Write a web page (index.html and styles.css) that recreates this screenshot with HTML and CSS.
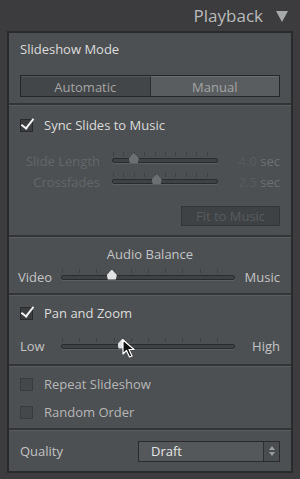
FILE: index.html
```html
<!DOCTYPE html>
<html lang="en">
<head>
    <meta charset="UTF-8">
    <title>Playback</title>
    <link rel="stylesheet" href="styles.css">
</head>
<body>
    <div class="header">
        <span class="title">Playback</span>
        <span class="arrow"></span>
    </div>

    <div class="panel">
        <div class="section mode">
            <div class="label">Slideshow Mode</div>
            <div class="segmented">
                <div class="seg">Automatic</div>
                <div class="seg on">Manual</div>
            </div>
        </div>

        <div class="section sync">
            <label class="check"><span class="box checked"></span>Sync Slides to Music</label>
            <div class="slider-row dim">
                <span class="name">Slide Length</span>
                <div class="track ticks"><span class="thumb dark" style="left: 20%"></span></div>
                <span class="value">4.0 <b>sec</b></span>
            </div>
            <div class="slider-row dim">
                <span class="name">Crossfades</span>
                <div class="track ticks"><span class="thumb dark" style="left: 42%"></span></div>
                <span class="value">2.5 <b>sec</b></span>
            </div>
            <div class="fit-row"><div class="fit">Fit to Music</div></div>
        </div>

        <div class="section audio">
            <div class="center">Audio Balance</div>
            <div class="range-row">
                <span>Video</span>
                <div class="track ticks wide"><span class="thumb" style="left: 27%"></span></div>
                <span>Music</span>
            </div>
        </div>

        <div class="section pan">
            <label class="check"><span class="box checked"></span>Pan and Zoom</label>
            <div class="range-row">
                <span>Low</span>
                <div class="track ticks wide"><span class="thumb" style="left: 35%"></span>
                    <svg class="cursor" width="14" height="20" viewBox="0 0 14 20">
                        <path d="M1 1 L1 15 L4.5 11.5 L7.5 18 L10 17 L7 10.5 L12 10.5 Z" fill="#111" stroke="#fff" stroke-width="1.2" stroke-linejoin="round"/>
                    </svg>
                </div>
                <span>High</span>
            </div>
        </div>

        <div class="section loop">
            <label class="check"><span class="box"></span>Repeat Slideshow</label>
            <label class="check"><span class="box"></span>Random Order</label>
        </div>

        <div class="section quality">
            <span>Quality</span>
            <div class="select">
                <span class="current">Draft</span>
                <span class="spin">
                    <svg width="8" height="12" viewBox="0 0 8 12"><path d="M4 1 L7 5 L1 5 Z M4 11 L7 7 L1 7 Z" fill="#9a9c9e"/></svg>
                </span>
            </div>
        </div>
    </div>
</body>
</html>
```

FILE: styles.css
```css
body {
    margin: 0;
    width: 300px;
    height: 479px;
    background: #3c3c3e;
    font-family: "Open Sans", "DejaVu Sans", sans-serif;
    font-size: 13px;
    color: #cfd0d0;
    overflow: hidden;
}

.header {
    display: flex;
    justify-content: flex-end;
    align-items: center;
    gap: 13px;
    height: 31px;
    padding-right: 12px;
}

.title {
    font-size: 17px;
    color: #b9babb;
}

.arrow {
    width: 0;
    height: 0;
    border-left: 6px solid transparent;
    border-right: 6px solid transparent;
    border-top: 11px solid #a7a8aa;
    margin-top: 2px;
}

.panel {
    margin: 0 7px;
    height: 442px;
    background: #4d5052;
    border: 2px solid #2a2a2c;
    box-sizing: border-box;
    display: flex;
    flex-direction: column;
}

.section {
    border-bottom: 2px solid #333436;
    box-shadow: 0 1px 0 #5a5d5f;
    padding: 0 11px;
    margin-bottom: 1px;
}

.section:last-child {
    border-bottom: none;
    box-shadow: none;
    margin-bottom: 0;
}

.mode {
    height: 72px;
    padding-top: 7px;
    box-sizing: border-box;
}

.label {
    color: #dcdcdc;
    line-height: 18px;
}

.segmented {
    display: flex;
    margin-top: 17px;
    height: 20px;
    border: 1px solid #262628;
}

.seg {
    flex: 1;
    display: flex;
    align-items: center;
    justify-content: center;
    background: #434648;
    color: #a3a5a6;
    border-top: 1px solid #55585a;
}

.seg.on {
    background: #5a5d5f;
    border-left: 1px solid #2c2c2e;
    border-top: 1px solid #6c6f71;
}

.sync {
    height: 131px;
    box-sizing: border-box;
    padding-top: 10px;
}

.check {
    display: flex;
    align-items: center;
    gap: 11px;
    height: 18px;
    color: #dcdcdc;
}

.box {
    width: 11px;
    height: 11px;
    background: #3b3d3f;
    border: 1px solid #2a2a2c;
    position: relative;
}

.box.checked::after {
    content: "";
    position: absolute;
    left: 3px;
    top: -4px;
    width: 5px;
    height: 11px;
    border-right: 2.5px solid #f4f4f4;
    border-bottom: 2.5px solid #f4f4f4;
    transform: rotate(38deg);
}

.slider-row {
    display: flex;
    align-items: center;
    height: 21px;
}

.sync .check + .slider-row {
    margin-top: 16px;
}

.dim {
    color: #63666a;
}

.slider-row .name {
    width: 80px;
    text-align: right;
    padding-right: 12px;
    white-space: nowrap;
}

.slider-row .track {
    width: 104px;
}

.slider-row .value {
    flex: 1;
    text-align: right;
    color: #585b5e;
}

.slider-row .value b {
    font-weight: normal;
    color: #6c6f72;
}

.track {
    position: relative;
    height: 3px;
    background: #3f4244;
    border: 1px solid #2a2b2d;
    border-radius: 2px;
    box-shadow: 0 1px 0 #5c5f61;
}

.ticks::before {
    content: "";
    position: absolute;
    left: 0;
    right: 0;
    top: -7px;
    height: 4px;
    background: repeating-linear-gradient(90deg, #3e4143 0 1px, transparent 1px 10%);
}

.thumb {
    position: absolute;
    top: -6px;
    width: 10px;
    height: 10px;
    margin-left: -5px;
    background: #e2e3e4;
    clip-path: polygon(50% 0, 100% 55%, 90% 100%, 10% 100%, 0 55%);
}

.thumb.dark {
    background: #6d7072;
}

.fit-row {
    display: flex;
    justify-content: flex-end;
    margin-top: 14px;
}

.fit {
    width: 97px;
    height: 18px;
    display: flex;
    align-items: center;
    justify-content: center;
    background: #3f4244;
    border: 1px solid #343537;
    color: #585b5e;
}

.audio {
    height: 57px;
    box-sizing: border-box;
    padding-top: 8px;
}

.center {
    text-align: center;
    color: #c3c4c5;
    line-height: 16px;
}

.range-row {
    display: flex;
    align-items: center;
    justify-content: space-between;
    height: 22px;
    color: #c3c4c5;
}

.audio .range-row {
    margin-top: 4px;
}

.range-row .wide {
    width: 172px;
}

.audio .range-row span:first-child {
    margin-left: -2px;
}

.pan {
    height: 70px;
    box-sizing: border-box;
    padding-top: 8px;
}

.pan .range-row {
    margin-top: 13px;
}

.cursor {
    position: absolute;
    left: 60px;
    top: -6px;
}

.loop {
    height: 63px;
    box-sizing: border-box;
    padding-top: 8px;
    display: flex;
    flex-direction: column;
    gap: 10px;
}

.loop .check {
    color: #b6b7b8;
}

.loop .box {
    background: #45484a;
    border-color: #393b3d;
}

.quality {
    flex: 1;
    display: flex;
    align-items: center;
    justify-content: space-between;
    color: #c3c4c5;
}

.select {
    width: 140px;
    height: 19px;
    display: flex;
    border: 1px solid #2a2a2c;
    background: #55585a;
}

.select .current {
    flex: 1;
    padding-left: 12px;
    display: flex;
    align-items: center;
    color: #e6e6e6;
}

.spin {
    width: 15px;
    border-left: 1px solid #2e2f31;
    display: flex;
    align-items: center;
    justify-content: center;
    background: #4a4d4f;
}
```
